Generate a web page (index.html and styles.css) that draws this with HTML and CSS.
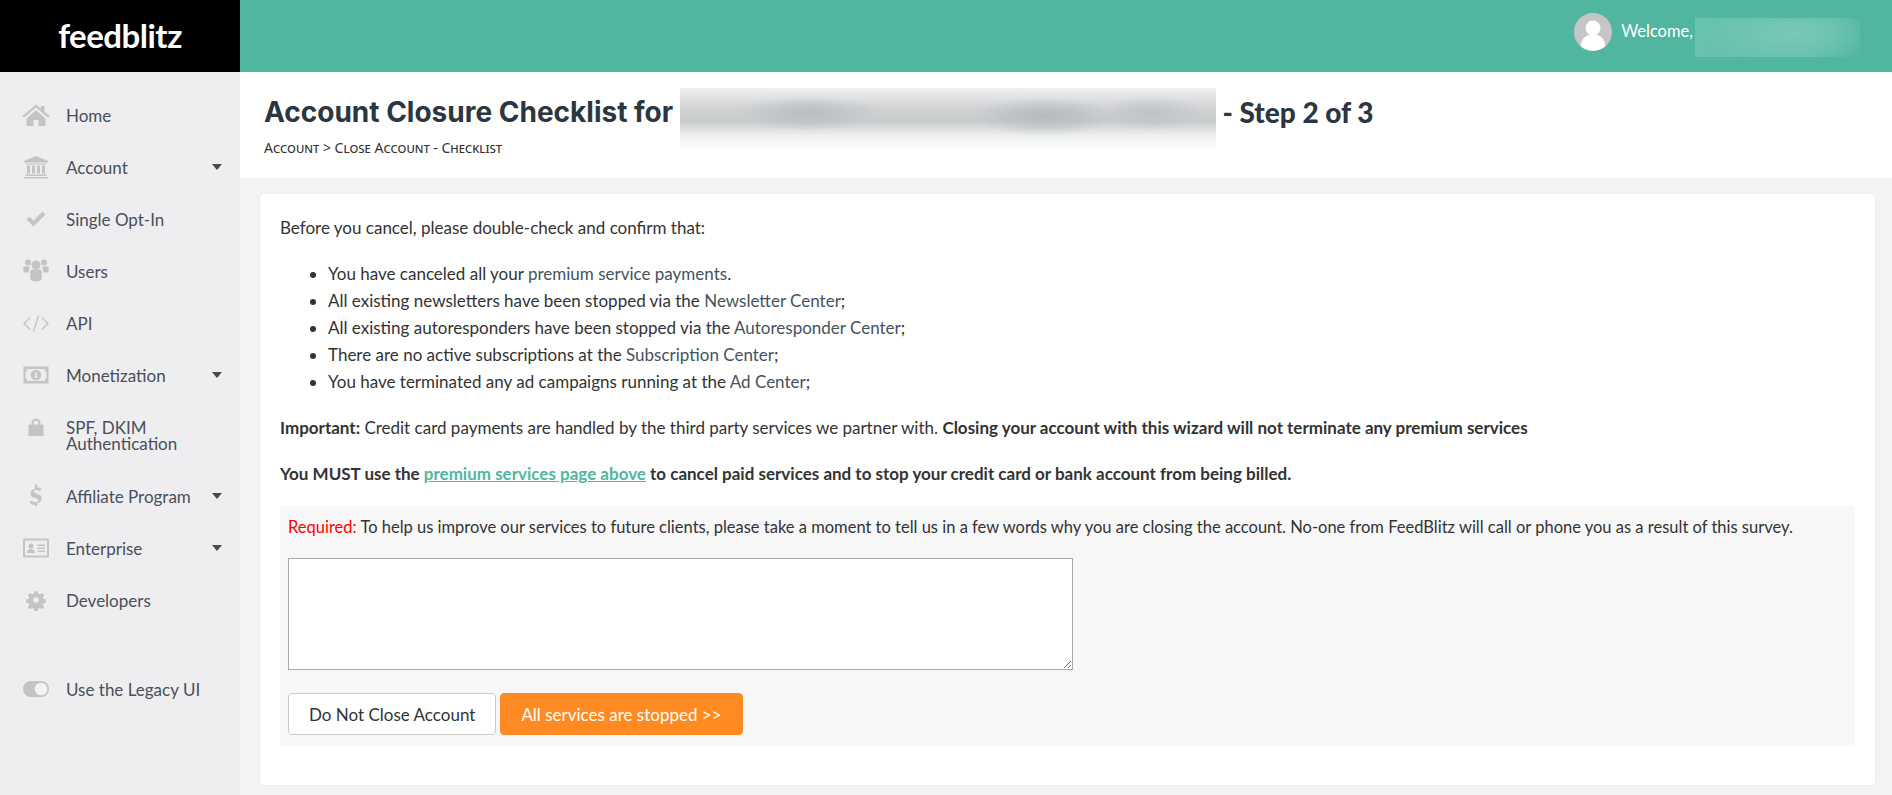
FILE: index.html
```html
<!DOCTYPE html>
<html lang="en">
<head>
  <meta charset="UTF-8">
  <title>FeedBlitz - Account Closure Checklist</title>
  <link rel="stylesheet" href="styles.css">
</head>
<body>

  <!-- Top bar -->
  <header class="topbar">
    <div class="brand">feedblitz</div>
    <div class="welcome">
      <svg class="avatar" viewBox="0 0 38 38">
        <circle cx="19" cy="19" r="19" fill="#c6c6c6"/>
        <circle cx="19" cy="15" r="7.5" fill="#fff"/>
        <path d="M6.500 33c1-8 6-11.500 12.500-11.500S30.500 25 31.500 33A19 19 0 0 1 6.500 33z" fill="#fff"/>
      </svg>
      <span class="welcome-text">Welcome,</span>
      <span class="welcome-blur"></span>
    </div>
  </header>

  <div class="layout">
    <!-- Sidebar -->
    <nav class="sidebar">
      <a class="nav-item" href="#">
        <svg class="nav-icon" viewBox="0 0 28 24"><path d="M14 1.500.5 13l1.400 1.700L14 4.500l12.100 10.200 1.400-1.700-5-4.200V3h-3.500v2.500zM4.500 15.500v7.500h7v-6h5v6h7v-7.500L14 7.300z"/></svg>
        <span>Home</span>
      </a>
      <a class="nav-item" href="#">
        <svg class="nav-icon" viewBox="0 0 28 24"><path d="M14 1 2 6v1.500h24V6zM3.500 8.500v1h21v-1zM5 10.500v8h3v-8zM10 10.500v8h3v-8zM15 10.500v8h3v-8zM20 10.500v8h3v-8zM3.500 19.500v1.500h21v-1.500zM2 22v1.500h24V22z"/></svg>
        <span>Account</span>
        <i class="caret"></i>
      </a>
      <a class="nav-item" href="#">
        <svg class="nav-icon" viewBox="0 0 28 24"><path d="m4.500 12.500 3-3 4 4 9-9 3 3-12 12z"/></svg>
        <span>Single Opt-In</span>
      </a>
      <a class="nav-item" href="#">
        <svg class="nav-icon" viewBox="0 0 28 24"><circle cx="6" cy="3.500" r="3"/><circle cx="22" cy="3.500" r="3"/><circle cx="14" cy="6" r="4.500"/><path d="M1.500 8c1.500-1 5-1 6.500.5-.8 1-1.200 2.500-1.200 5H3C1.500 13.500.5 11 1.500 8zM26.500 8c-1.500-1-5-1-6.500.5.800 1 1.200 2.500 1.200 5H25c1.500 0 2.500-2.500 1.500-5zM8.300 13c0-1.500 1-2.500 2.500-2.500h6.400c1.500 0 2.500 1 2.500 2.500v6.500c0 1.700-2 3-5.700 3s-5.700-1.300-5.700-3z"/></svg>
        <span>Users</span>
      </a>
      <a class="nav-item" href="#">
        <svg class="nav-icon icon-line" viewBox="0 0 28 24"><path d="M8 6.500 2 12.500l6 6M20 6.500l6 6-6 6M16.500 4.500l-5 16"/></svg>
        <span>API</span>
      </a>
      <a class="nav-item" href="#">
        <svg class="nav-icon" viewBox="0 0 28 24"><path fill-rule="evenodd" d="M1.500 3.500h25v17h-25zM5 6c0 2-1 3-1.500 3v6c.8 0 1.500 1 1.500 3h18c0-2 .700-3 1.500-3V9c-.8 0-1.500-1-1.500-3zM14 6.700a5.300 5.300 0 1 1 0 10.600 5.300 5.300 0 0 1 0-10.600zm-1.800 2.800v1h1v3.200h-1v1h3.600v-1h-1V9.500z"/></svg>
        <span>Monetization</span>
        <i class="caret"></i>
      </a>
      <a class="nav-item nav-item-tall" href="#">
        <svg class="nav-icon" viewBox="0 0 28 24"><path d="M9.500 9.500V8a4.500 4.500 0 0 1 9 0v1.500h-2.200V8a2.300 2.300 0 0 0-4.600 0v1.500zM7.500 9.500h13c.6 0 1 .4 1 1V20c0 .6-.4 1-1 1h-13c-.6 0-1-.4-1-1v-9.500c0-.6.400-1 1-1z"/></svg>
        <span class="nav-label-tall">SPF, DKIM<br>Authentication</span>
      </a>
      <a class="nav-item" href="#">
        <svg class="nav-icon" viewBox="0 0 28 24"><path d="M12.900.5h2.200v2.700c1.800.2 3.200.8 4.400 1.700l-1.700 2.500c-1.200-.8-2.500-1.300-3.700-1.300-1.400 0-2.200.6-2.200 1.500 0 1 .9 1.500 3 2.200 2.800.9 4.800 2.100 4.800 4.800 0 2.500-1.700 4.100-4.600 4.600v2.800h-2.200V21c-2.100-.2-3.900-.9-5.300-2.200l1.700-2.400c1.500 1.200 2.900 1.800 4.400 1.800 1.600 0 2.500-.6 2.500-1.700 0-1.100-.9-1.600-3.200-2.400-2.800-.9-4.600-2.100-4.600-4.700 0-2.300 1.600-3.900 4.500-4.400z"/></svg>
        <span>Affiliate Program</span>
        <i class="caret"></i>
      </a>
      <a class="nav-item" href="#">
        <svg class="nav-icon" viewBox="0 0 28 24"><path fill-rule="evenodd" d="M2.500 2.500h23c1 0 1.500.6 1.500 1.500v16c0 1-.5 1.500-1.500 1.500h-23C1.500 21.500 1 21 1 20V4c0-.9.5-1.500 1.500-1.500zM3 4.500v15h22v-15zM9 7.500a2.500 2.500 0 1 1 0 5 2.500 2.500 0 0 1 0-5zM5 17c0-2.500 1.500-4 4-4s4 1.500 4 4zM15.500 8.500h7.500v1.500h-7.500zM15.500 11.500h7.500V13h-7.500zM15.500 14.500h7.500V16h-7.500z"/></svg>
        <span>Enterprise</span>
        <i class="caret"></i>
      </a>
      <a class="nav-item" href="#">
        <svg class="nav-icon" viewBox="0 0 28 24"><path fill-rule="evenodd" d="M12 1h4l.7 3 2 .8 2.700-1.600 2.800 2.800-1.600 2.700.8 2 3 .7v4l-3 .7-.8 2 1.600 2.700-2.800 2.800-2.700-1.600-2 .8-.7 3h-4l-.7-3-2-.8-2.700 1.600-2.800-2.800 1.600-2.700-.8-2-3-.7v-4l3-.7.800-2L3.800 6l2.800-2.800 2.700 1.600 2-.8zM14 8.500a3.500 3.500 0 1 0 0 7 3.500 3.500 0 0 0 0-7z" transform="translate(2.800 2.400) scale(.8)"/></svg>
        <span>Developers</span>
      </a>
      <div class="nav-divider"></div>
      <a class="nav-item" href="#">
        <svg class="nav-icon" viewBox="0 0 28 24"><path d="M9 4h10a8 8 0 0 1 0 16H9A8 8 0 0 1 9 4z"/><circle cx="19" cy="12" r="6.300" fill="#f3f3f4"/></svg>
        <span>Use the Legacy UI</span>
      </a>
    </nav>

    <!-- Main content -->
    <main class="main">
      <div class="page-head">
        <h1 class="page-title">Account Closure Checklist for <span class="title-blur"></span><span class="title-step"> - Step 2 of 3</span></h1>
        <div class="crumbs">Account &gt; Close Account - Checklist</div>
      </div>

      <div class="card">
        <p>Before you cancel, please double-check and confirm that:</p>
        <ul class="checks">
          <li>You have canceled all your <a href="#">premium service payments</a>.</li>
          <li>All existing newsletters have been stopped via the <a href="#">Newsletter Center</a>;</li>
          <li>All existing autoresponders have been stopped via the <a href="#">Autoresponder Center</a>;</li>
          <li>There are no active subscriptions at the <a href="#">Subscription Center</a>;</li>
          <li>You have terminated any ad campaigns running at the <a href="#">Ad Center</a>;</li>
        </ul>
        <p><b>Important:</b> Credit card payments are handled by the third party services we partner with. <b>Closing your account with this wizard will not terminate any premium services</b></p>
        <p><b>You MUST use the <a class="link-green" href="#">premium services page above</a> to cancel paid services and to stop your credit card or bank account from being billed.</b></p>

        <form class="survey">
          <div class="survey-text"><span class="required">Required:</span> To help us improve our services to future clients, please take a moment to tell us in a few words why you are closing the account. No-one from FeedBlitz will call or phone you as a result of this survey.</div>
          <textarea class="survey-input"></textarea>
          <div class="survey-btns">
            <button type="button" class="btn btn-plain">Do Not Close Account</button>
            <button type="button" class="btn btn-orange">All services are stopped &gt;&gt;</button>
          </div>
        </form>
      </div>
    </main>
  </div>
</body>
</html>
```

FILE: styles.css
```css
/* Base styles */
* {
  margin: 0;
  padding: 0;
  box-sizing: border-box;
}

body {
  font-family: 'Lato', 'Liberation Sans', sans-serif;
  font-size: 17px;
  color: #333;
  background-color: #f3f3f3;
  height: 795px;
  overflow: hidden;
}

a {
  text-decoration: none;
}

/* Top bar */
.topbar {
  height: 72px;
  background-color: #50b6a0;
  display: flex;
  justify-content: space-between;
}

.brand {
  width: 240px;
  height: 72px;
  background-color: #000;
  color: #fff;
  font-size: 33px;
  font-weight: 700;
  letter-spacing: -0.5px;
  line-height: 70px;
  text-align: center;
}

.welcome {
  display: flex;
  align-items: flex-start;
  padding-top: 13px;
  margin-right: 32px;
}

.avatar {
  width: 38px;
  height: 38px;
  margin-right: 9px;
}

.welcome-text {
  color: #fff;
  font-size: 16.5px;
  line-height: 20px;
  margin-top: 8px;
}

.welcome-blur {
  width: 165px;
  height: 39px;
  margin: 5px 0 0 2px;
  background:
    radial-gradient(ellipse 90px 30px at 60% 40%, #78c9b7, rgba(120, 201, 183, 0)),
    linear-gradient(90deg, #68c2ae 0%, #66c0ac 70%, #50b6a0 100%);
}

/* Sidebar */
.layout {
  display: flex;
  height: 723px;
}

.sidebar {
  width: 240px;
  flex-shrink: 0;
  background-color: #eeeef0;
  padding-top: 17px;
}

.nav-item {
  display: flex;
  align-items: center;
  height: 52px;
  padding: 0 18px 0 22px;
  color: #4a4f5a;
}

.nav-item-tall {
  height: 69px;
  align-items: flex-start;
  padding-top: 14px;
}

.nav-label-tall {
  line-height: 16px;
  padding-top: 5px;
}

.nav-divider {
  height: 1px;
  margin: 18px 25px 18px 23px;
  background-color: #f0f0f2;
}

.nav-icon {
  width: 28px;
  height: 24px;
  flex-shrink: 0;
  margin-right: 16px;
  fill: #c4c4c6;
}

.icon-line {
  fill: none;
  stroke: #c4c4c6;
  stroke-width: 1.3;
}

.caret {
  margin-left: auto;
  width: 0;
  height: 0;
  border-left: 5px solid transparent;
  border-right: 5px solid transparent;
  border-top: 6px solid #4a4a4a;
}

/* Main content */
.main {
  flex: 1;
  min-width: 0;
}

.page-head {
  height: 106px;
  background-color: #fff;
  padding: 18px 24px 0;
}

.page-title {
  font-family: 'Inter', 'Liberation Sans', sans-serif;
  font-size: 28px;
  font-weight: 700;
  color: #2b3640;
  display: flex;
  align-items: center;
  white-space: pre;
  height: 44px;
}

.title-blur {
  align-self: flex-start;
  width: 536px;
  height: 60px;
  margin-top: -2px;
  background:
    radial-gradient(ellipse 70px 20px at 68% 47%, #b6babd, rgba(182, 186, 189, 0)),
    radial-gradient(ellipse 70px 18px at 24% 42%, #b9bdc0, rgba(185, 189, 192, 0)),
    radial-gradient(ellipse 50px 18px at 88% 42%, #c0c3c6, rgba(192, 195, 198, 0)),
    linear-gradient(#f0f1f1 0%, #cfd1d3 35%, #c9cccd 55%, #eff0f0 80%, #fcfcfc 100%);
}

.title-step {
  font-family: 'Lato', sans-serif;
  font-weight: 900;
}

.crumbs {
  font-family: 'Noto Sans', sans-serif;
  font-variant: small-caps;
  font-size: 14px;
  color: #333;
  margin-top: 4px;
}

.card {
  margin: 16px 17px 0 20px;
  height: 591px;
  background-color: #fff;
  border-radius: 4px;
  box-shadow: 0 0 2px rgba(0, 0, 0, 0.08);
  padding: 22px 20px;
}

.card p {
  margin-bottom: 22px;
  line-height: 24px;
}

.checks {
  margin: -2px 0 21px 48px;
  line-height: 27px;
}

.checks a {
  color: #46525c;
}

.link-green {
  color: #50b6a0;
  text-decoration: underline;
}

.survey {
  background-color: #f7f7f7;
  padding: 9px 8px;
  height: 240px;
  margin-top: -2px;
}

.survey-text {
  font-size: 16.5px;
  line-height: 24px;
}

.required {
  color: #f00;
}

.survey-input {
  display: block;
  width: 785px;
  height: 112px;
  margin-top: 19px;
  border: 1px solid #a9a9a9;
  background-color: #fff;
}

.survey-btns {
  display: flex;
  gap: 4px;
  margin-top: 23px;
}

.btn {
  height: 42px;
  border-radius: 4px;
  font-family: 'Lato', sans-serif;
  font-size: 17px;
  padding: 0 20px;
}

.btn-plain {
  background-color: #fff;
  border: 1px solid #ccc;
  color: #333;
}

.btn-orange {
  background-color: #ff8a21;
  border: 1px solid #ff8a21;
  color: #fff;
}
```
